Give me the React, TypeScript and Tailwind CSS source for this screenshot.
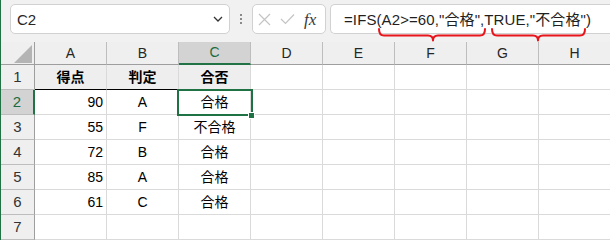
import React from "react";

const cols = ["A", "B", "C", "D", "E", "F", "G", "H"];

const rows: { n: number; cells: string[] }[] = [
  { n: 1, cells: ["得点", "判定", "合否"] },
  { n: 2, cells: ["90", "A", "合格"] },
  { n: 3, cells: ["55", "F", "不合格"] },
  { n: 4, cells: ["72", "B", "合格"] },
  { n: 5, cells: ["85", "A", "合格"] },
  { n: 6, cells: ["61", "C", "合格"] },
  { n: 7, cells: [] },
];

function Brace({ x0, x1, mid }: { x0: number; x1: number; mid: number }) {
  const y0 = 29;
  const y1 = 35.5;
  const y2 = 40.5;
  const r = 5;
  const d = `M${x0} ${y0} Q${x0} ${y1} ${x0 + r} ${y1} L${mid - r} ${y1} Q${mid} ${y1} ${mid} ${y2} Q${mid} ${y1} ${mid + r} ${y1} L${x1 - r} ${y1} Q${x1} ${y1} ${x1} ${y0}`;
  return <path d={d} fill="none" stroke="#e8141c" strokeWidth="2" strokeLinecap="round" strokeLinejoin="round" />;
}

export default function App() {
  return (
    <div
      className="relative w-[610px] h-[240px] overflow-hidden bg-white border-l border-[#217346] text-[#1f1f1f]"
      style={{ fontFamily: '"Liberation Sans", "Noto Sans CJK JP", sans-serif' }}
    >
      {/* Formula bar */}
      <div className="h-[42px] bg-[#f1f1f1] flex items-start pt-[4px] pl-[9px] gap-0">
        <div className="w-[220px] h-[30px] bg-white border border-[#d1d1d1] rounded-[5px] flex items-center justify-between pl-[6px] pr-[5px]">
          <span className="text-[15px] text-[#262626] pt-[2px]">C2</span>
          <svg width="12" height="8" viewBox="0 0 12 8">
            <path d="M2 2 L6 6 L10 2" fill="none" stroke="#333" strokeWidth="1.3" />
          </svg>
        </div>
        <div className="w-[22px] h-[30px] flex flex-col items-center justify-center gap-[2px]">
          <span className="w-[2px] h-[2px] bg-[#8a8a8a]" />
          <span className="w-[2px] h-[2px] bg-[#8a8a8a]" />
          <span className="w-[2px] h-[2px] bg-[#8a8a8a]" />
        </div>
        <div className="w-[74px] h-[30px] bg-white border border-[#d1d1d1] rounded-[5px] flex items-center pl-[5px] gap-[9px]">
          <svg width="13" height="13" viewBox="0 0 13 13">
            <path d="M1 1 L12 12 M12 1 L1 12" stroke="#c4c4c4" strokeWidth="1.2" />
          </svg>
          <svg width="15" height="12" viewBox="0 0 15 12">
            <path d="M1 6 L5.5 10.5 L14 1.5" fill="none" stroke="#c4c4c4" strokeWidth="1.2" />
          </svg>
          <span
            className="text-[17px] italic text-[#3a3a3a] leading-none"
            style={{ fontFamily: '"Liberation Serif", serif' }}
          >
            fx
          </span>
        </div>
        <div className="flex-1 ml-[4px] h-[30px] bg-white border border-[#d1d1d1] rounded-l-[5px] border-r-0 flex items-center pl-[13px]">
          <span className="text-[15px] tracking-[0.1px] text-[#1f1f1f] whitespace-nowrap pt-[2px]">=IFS(A2&gt;=60,"合格",TRUE,"不合格")</span>
        </div>
      </div>

      {/* Sheet */}
      <div className="grid grid-cols-[34px_repeat(8,72px)]">
        {/* column headers */}
        <div className="h-[23px] bg-[#efefef] border-b border-[#9e9e9e] border-r border-[#9e9e9e] flex items-end justify-end pr-[2px] pb-[1px]">
          <svg width="18" height="18" viewBox="0 0 18 18">
            <polygon points="18,0 18,18 0,18" fill="#b4b4b4" />
          </svg>
        </div>
        {cols.map((c) =>
          c === "C" ? (
            <div
              key={c}
              className="h-[23px] bg-[#d3d3d3] border-b-2 border-[#217346] border-r border-r-[#bdbdbd] flex items-center justify-center text-[14px] text-[#1d6b40]"
            >
              {c}
            </div>
          ) : (
            <div
              key={c}
              className="h-[23px] bg-[#efefef] border-b border-[#9e9e9e] border-r border-r-[#bdbdbd] flex items-center justify-center text-[14px] text-[#262626]"
            >
              {c}
            </div>
          )
        )}

        {rows.map((r) => (
          <React.Fragment key={r.n}>
            <div
              className={
                r.n === 2
                  ? "h-[25px] bg-[#d3d3d3] border-r-2 border-r-[#217346] border-b border-b-[#bdbdbd] flex items-center justify-center text-[15px] text-[#1d6b40]"
                  : "h-[25px] bg-[#efefef] border-r border-r-[#9e9e9e] border-b border-b-[#bdbdbd] flex items-center justify-center text-[15px] text-[#333]"
              }
            >
              {r.n}
            </div>
            {cols.map((c, i) => {
              const v = r.cells[i] ?? "";
              const header = r.n === 1 && i < 3;
              const num = i === 0 && r.n > 1;
              return (
                <div
                  key={c}
                  className={
                    "h-[25px] border-r border-r-[#dadada] border-b flex items-center text-[14px] text-black " +
                    (header ? "bg-[#eeeeee] border-b-black font-bold " : "border-b-[#dadada] ") +
                    (num ? "justify-end pr-[3px]" : "justify-center")
                  }
                >
                  {v}
                </div>
              );
            })}
          </React.Fragment>
        ))}
      </div>

      {/* selection box over C2 */}
      <div className="absolute left-[176px] top-[89px] w-[76px] h-[27px] border-2 border-[#1f7244]" />
      <div className="absolute left-[247px] top-[112px] w-[7px] h-[7px] bg-[#1f7244] border border-white" />

      {/* red braces under the formula */}
      <svg className="absolute left-0 top-0" width="610" height="50" viewBox="0 0 610 50">
        <Brace x0={378} x1={484} mid={432} />
        <Brace x0={491} x1={584} mid={537} />
      </svg>
    </div>
  );
}
